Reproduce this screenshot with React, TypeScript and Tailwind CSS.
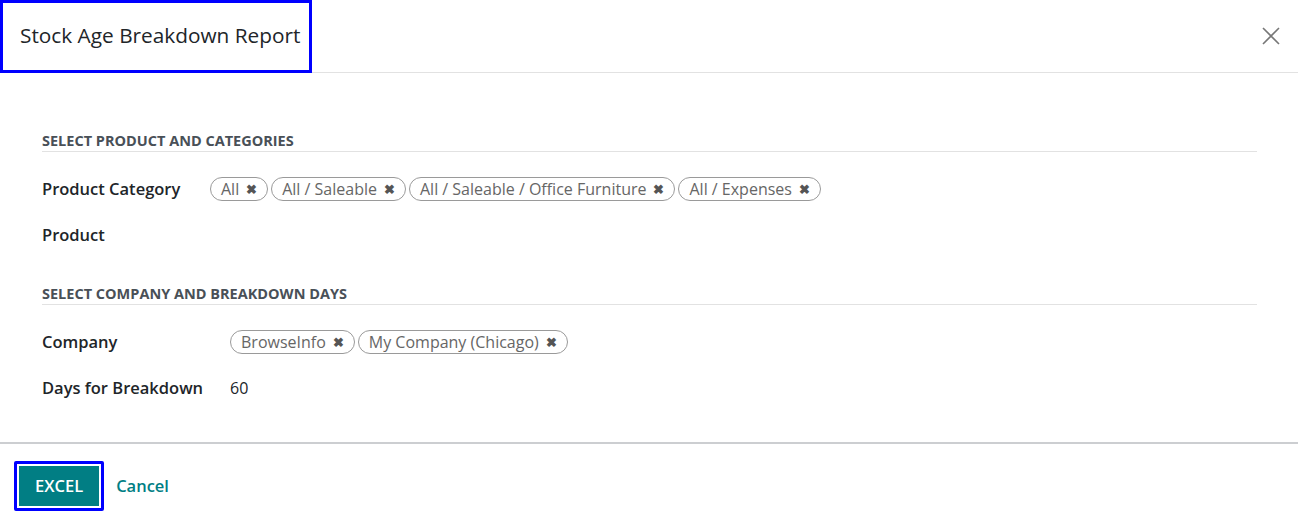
import React from "react";

function Tag({ label }: { label: string }) {
  return (
    <span className="inline-flex items-center h-[24px] px-[10px] rounded-full border border-[#9a9a9a] text-[#666] text-[16px] leading-none gap-[7px]">
      {label}
      <span className="text-[13px] text-[#555] font-bold">✖</span>
    </span>
  );
}

function SectionTitle({ children }: { children: React.ReactNode }) {
  return (
    <div className="text-[14.5px] leading-[20px] font-bold text-[#495057] uppercase border-b border-[#e2e2e2]">
      {children}
    </div>
  );
}

export default function App() {
  return (
    <div className="w-[1298px] h-[528px] bg-white text-[#212529]" style={{ fontFamily: '"Open Sans", "Noto Sans", sans-serif' }}>
      <header className="h-[73px] flex items-center justify-between border-b border-[#e2e2e2]">
        <div className="h-[73px] w-[312px] border-[3px] border-[#0000ff] flex items-center pl-[17px]">
          <h1 className="text-[20.8px] font-medium text-[#212529]">Stock Age Breakdown Report</h1>
        </div>
        <button className="mr-[18px] text-[#777]">
          <svg width="18" height="18" viewBox="0 0 18 18" stroke="currentColor" strokeWidth="1.6">
            <path d="M1 1 L17 17 M17 1 L1 17" />
          </svg>
        </button>
      </header>

      <main className="pl-[42px] pr-[41px] pt-[58px] h-[369px]">
        <SectionTitle>Select Product and Categories</SectionTitle>
        <div className="flex items-center h-[24px] mt-[25px]">
          <div className="w-[168px] text-[16.5px] font-semibold">Product Category</div>
          <div className="flex gap-[3px]">
            <Tag label="All" />
            <Tag label="All / Saleable" />
            <Tag label="All / Saleable / Office Furniture" />
            <Tag label="All / Expenses" />
          </div>
        </div>
        <div className="mt-[22px] h-[24px] leading-[24px] text-[16.5px] font-semibold">Product</div>

        <div className="mt-[37px]">
          <SectionTitle>Select Company and Breakdown Days</SectionTitle>
        </div>
        <div className="flex items-center h-[24px] mt-[25px]">
          <div className="w-[188px] text-[16.5px] font-semibold">Company</div>
          <div className="flex gap-[3px]">
            <Tag label="BrowseInfo" />
            <Tag label="My Company (Chicago)" />
          </div>
        </div>
        <div className="flex items-center h-[24px] mt-[22px]">
          <div className="w-[188px] text-[16.5px] font-semibold">Days for Breakdown</div>
          <div className="text-[16px]">60</div>
        </div>
      </main>

      <footer className="border-t-2 border-[#ccced1] flex items-center gap-[12px] pl-[14px] pt-[17px]">
        <div className="border-[3px] border-[#0000ff] rounded-[2px] p-[1px]">
          <button className="bg-[#017e84] border border-white text-white text-[16.5px] font-semibold h-[42px] px-[16px]">EXCEL</button>
        </div>
        <button className="text-[#017e84] text-[16.5px] font-semibold">Cancel</button>
      </footer>
    </div>
  );
}
